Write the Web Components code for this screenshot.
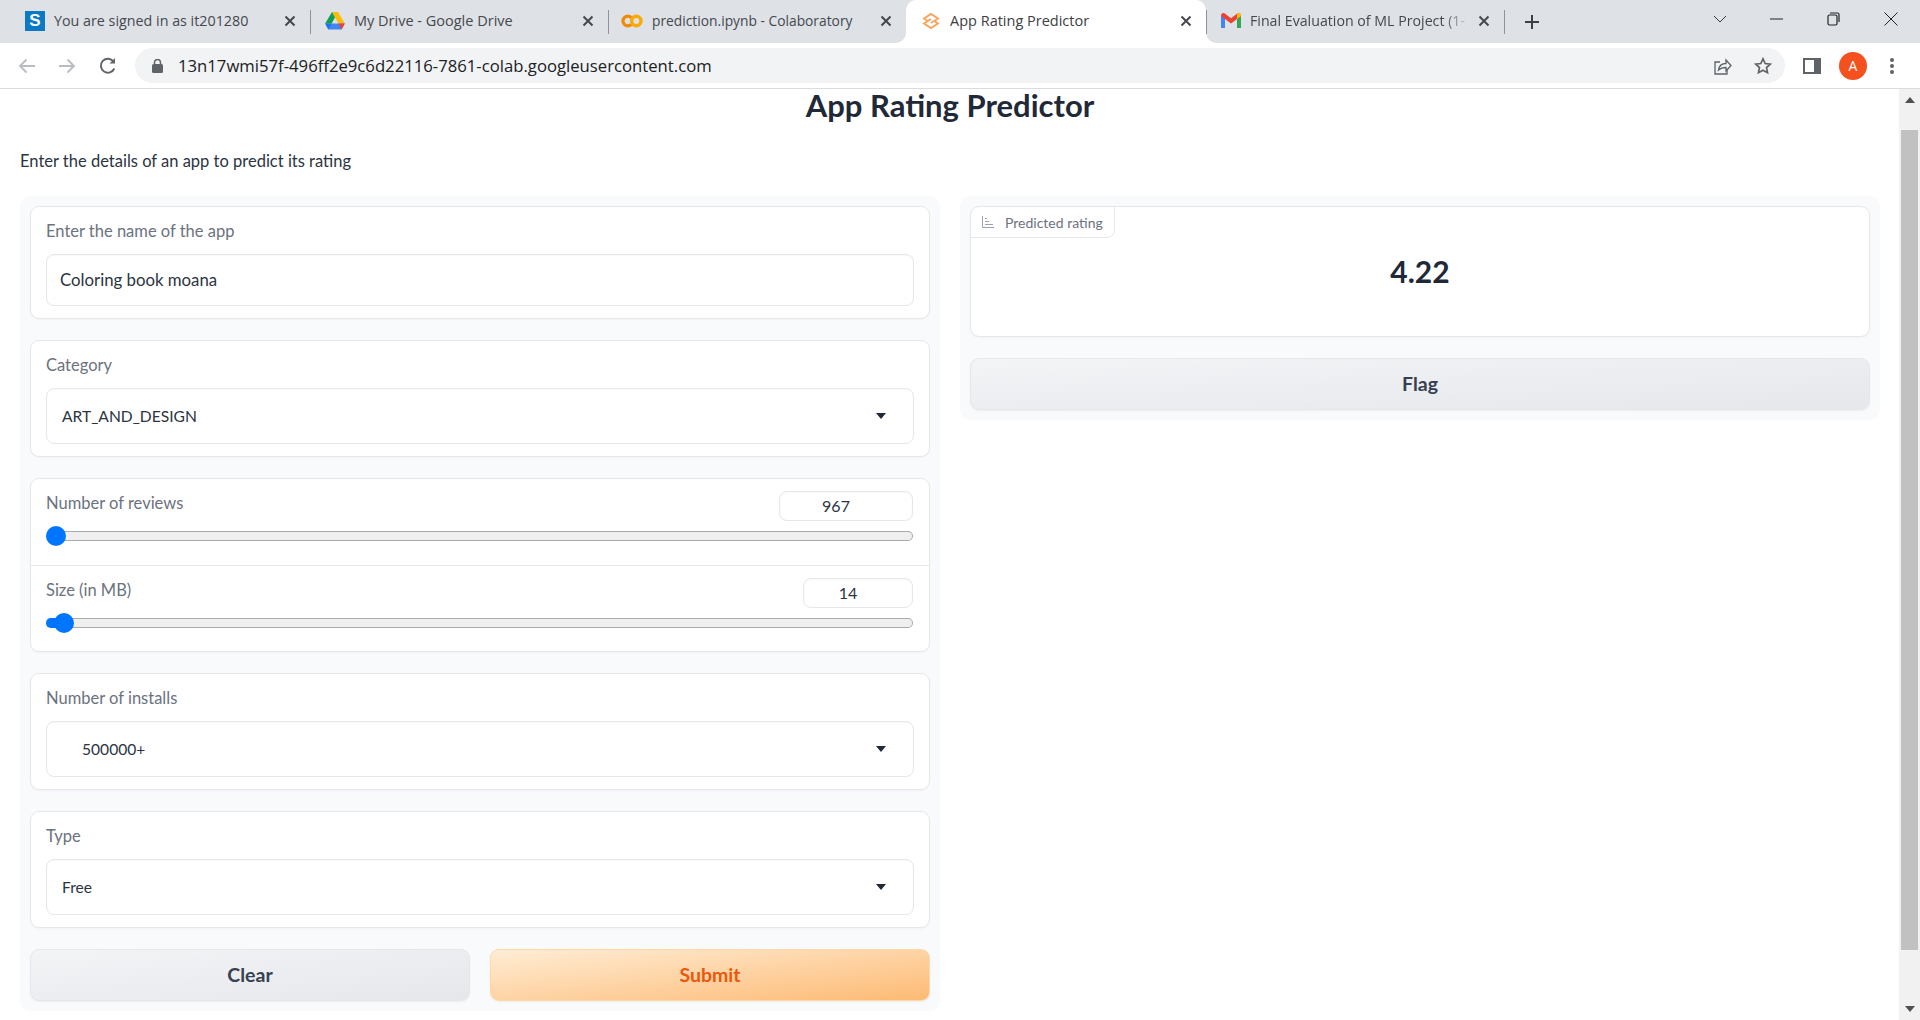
<!DOCTYPE html>
<html>
<head>
<meta charset="utf-8">
<title>App Rating Predictor</title>
<style>
  html, body { margin: 0; height: 100%; overflow: hidden; background: #fff; }
  body { display: flex; flex-direction: column; width: 1920px; height: 1020px; font-family: "Open Sans", "Liberation Sans", sans-serif; }
</style>
</head>
<body>
  <tab-strip>
    <browser-tab style="--w:300px;--fs:14.300px" title-text="You are signed in as it201280">
      <span slot="icon" style="display:flex;width:20px;height:20px;background:#0b79c4;color:#fff;align-items:center;justify-content:center;font:bold 17px 'Liberation Sans',sans-serif">S</span>
    </browser-tab>
    <browser-tab style="--w:298px" title-text="My Drive - Google Drive">
      <svg slot="icon" width="20" height="18" viewBox="0 0 20 18"><path d="M7 0h6l6.800 11.600h-6.400z" fill="#fbbc04"/><path d="M0.200 11.600h19.600L16.600 17.600H3.400z" fill="#4285f4"/><path d="M0.200 11.600 3.400 17.600 6.600 11.600z" fill="#1a73e8"/><path d="M13.400 11.600 16.600 17.600 19.800 11.600z" fill="#ea4335"/><path d="M7 0 10 5.400 6.600 11.600H0.200z" fill="#0f9d58"/></svg>
    </browser-tab>
    <browser-tab style="--w:298px;--fs:13.800px" title-text="prediction.ipynb - Colaboratory">
      <svg slot="icon" width="22" height="14" viewBox="0 0 22 14" style="margin-left:-2px" fill="none" stroke-width="3.400"><circle cx="15.300" cy="7" r="4.700" stroke="#f9ab00"/><path d="M10.200 3.600A4.800 4.800 0 1 0 10.200 10.400" stroke="#f08a0c"/></svg>
    </browser-tab>
    <browser-tab active style="--w:300px" title-text="App Rating Predictor">
      <svg slot="icon" width="18" height="18" viewBox="0 0 18 18" fill="none" stroke="#f7a35c" stroke-width="1.900"><path d="M5.500 9 2 6.500 9 2l7 4.500L9 11"/><path d="M12.500 9 16 11.500 9 16l-7-4.500L9 7"/></svg>
    </browser-tab>
    <browser-tab style="--w:298px;--fs:14.200px" fade title-text="Final Evaluation of ML Project (1-">
      <svg slot="icon" width="20" height="15" viewBox="0 0 20 15"><path d="M0 2.500V15h4V6l6 4.500L16 6v9h4V2.500C20 .5 17.800-.6 16.200.6L10 5.200 3.800.6C2.200-.6 0 .5 0 2.500z" fill="#ea4335"/><path d="M0 2.500V15h4V6L0 3z" fill="#4285f4"/><path d="M16 15h4V3l-4 3z" fill="#34a853"/><path d="M16 6l4-3V2.500C20 .5 17.800-.6 16.200.6L16 .8z" fill="#fbbc04"/></svg>
    </browser-tab>
  </tab-strip>
  <chrome-toolbar url="13n17wmi57f-496ff2e9c6d22116-7861-colab.googleusercontent.com"></chrome-toolbar>
  <page-view>
    <app-header heading="App Rating Predictor" description="Enter the details of an app to predict its rating"></app-header>
    <panel-row>
      <gr-panel>
        <gr-field label="Enter the name of the app" value="Coloring book moana"></gr-field>
        <gr-field dropdown label="Category" value="ART_AND_DESIGN"></gr-field>
        <gr-sliders>
          <gr-slider label="Number of reviews" value="967" box="134" pos="10"></gr-slider>
          <gr-slider label="Size (in MB)" value="14" box="110" pos="18" filled></gr-slider>
        </gr-sliders>
        <gr-field dropdown indent label="Number of installs" value="500000+"></gr-field>
        <gr-field dropdown label="Type" value="Free"></gr-field>
        <gr-actions>
          <gr-button>Clear</gr-button>
          <gr-button primary>Submit</gr-button>
        </gr-actions>
      </gr-panel>
      <gr-panel>
        <gr-output label="Predicted rating" value="4.22"></gr-output>
        <gr-button>Flag</gr-button>
      </gr-panel>
    </panel-row>
  </page-view>

<script>
(function () {
    const sans = `Lato, "Noto Sans", sans-serif`;
    const ui = `"Open Sans", "Noto Sans", sans-serif`;

    // tiny helper so every element does the same shadow setup
    function define(name, html, init) {
        const tmpl = document.createElement("template");
        tmpl.innerHTML = html;
        customElements.define(name, class extends HTMLElement {
            constructor() {
                super();
                this.attachShadow({ mode: "open" }).appendChild(tmpl.content.cloneNode(true));
            }
            connectedCallback() {
                if (init) init(this, this.shadowRoot);
            }
        });
    }

    const closeIcon = `<svg width="12" height="12" viewBox="0 0 12 12" stroke="#45494e" stroke-width="2" fill="none"><path d="M1.500 1.500l9 9M10.500 1.500l-9 9"/></svg>`;

    define("tab-strip", `
      <style>
        :host { display: flex; height: 43px; flex: none; background: #dee1e6; padding-left: 10px; align-items: stretch; }
        .sep { width: 1px; height: 24px; background: #8f9296; align-self: center; margin-top: 1px; }
        .plus { margin-left: 19px; align-self: center; display: flex; }
        .win { margin-left: auto; display: flex; align-items: center; height: 38px; }
        .win svg { display: block; }
        .chev { margin-right: 43px; }
        .min { margin-right: 44px; }
        .max { margin-right: 44px; }
        .cls { margin-right: 22px; }
      </style>
      <slot></slot>
      <span class="sep"></span>
      <span class="plus"><svg width="16" height="16" viewBox="0 0 16 16" stroke="#3c4043" stroke-width="2"><path d="M8 1v14M1 8h14"/></svg></span>
      <div class="win">
        <svg class="chev" width="14" height="8" viewBox="0 0 14 8" fill="none" stroke="#3c4043"><path d="M1 1l6 6 6-6"/></svg>
        <svg class="min" width="13" height="2" viewBox="0 0 13 2" stroke="#222"><path d="M0 1h13"/></svg>
        <svg class="max" width="13" height="14" viewBox="0 0 13 14" fill="none" stroke="#222" stroke-width="1.200"><rect x="1" y="3" width="9" height="10" rx="1.500"/><path d="M3 1h7.500a1.500 1.500 0 0 1 1.500 1.500V10"/></svg>
        <svg class="cls" width="14" height="14" viewBox="0 0 14 14" fill="none" stroke="#222"><path d="M.5.500l13 13M13.500.500l-13 13"/></svg>
      </div>`);

    define("browser-tab", `
      <style>
        :host { display: flex; align-items: center; width: var(--w); box-sizing: border-box; padding: 0 14px 2px 15px; position: relative; font: var(--fs, 14.500px) ${ui}; color: #45494e; }
        :host([active]) { background: #fff; border-radius: 10px 10px 0 0; color: #3c4043; }
        :host([active])::before, :host([active])::after { content: ""; position: absolute; bottom: 0; width: 10px; height: 10px; background: radial-gradient(circle at 0 0, #dee1e6 9.500px, #fff 10px); }
        :host([active])::before { left: -10px; }
        :host([active])::after { right: -10px; background: radial-gradient(circle at 100% 0, #dee1e6 9.500px, #fff 10px); }
        :host(:not([active]):not(:first-child))::before { content: ""; position: absolute; left: 0; top: 10px; width: 1px; height: 24px; background: #8f9296; }
        .ico { width: 20px; flex: none; display: flex; align-items: center; justify-content: center; margin-right: 9px; }
        .t { flex: 1; white-space: nowrap; overflow: hidden; }
        :host([fade]) .t { -webkit-mask-image: linear-gradient(to right, #000 88%, transparent 100%); mask-image: linear-gradient(to right, #000 88%, transparent 100%); }
        .x { flex: none; display: flex; margin-left: 8px; }
      </style>
      <span class="ico"><slot name="icon"></slot></span>
      <span class="t"></span>
      <span class="x">${closeIcon}</span>`,
      (el, root) => { root.querySelector(".t").textContent = el.getAttribute("title-text"); });

    define("chrome-toolbar", `
      <style>
        :host { display: flex; flex: none; height: 46px; box-sizing: border-box; background: #fff; border-bottom: 1px solid #dadce0; align-items: center; padding: 0 0 0 18px; }
        .nav { display: flex; flex: none; width: 117px; align-items: center; }
        .nav svg + svg { margin-left: 22px; }
        .nav svg + svg + svg { margin-left: 23px; }
        .bar { width: 1650px; flex: none; height: 35px; box-sizing: border-box; background: #f1f3f4; border-radius: 18px; display: flex; align-items: center; padding: 0 13px 0 17px; font: 16.700px ${ui}; color: #202124; }
        .url { flex: 1; white-space: nowrap; }
        .lock { display: flex; margin-right: 15px; }
        .right { display: flex; align-items: center; gap: 22px; }
        .tools { display: flex; align-items: center; margin-left: 18px; }
        .avatar { width: 28px; height: 28px; border-radius: 50%; background: #f4511e; color: #fff; font: 14px ${ui}; display: flex; align-items: center; justify-content: center; margin: 0 23px 0 18px; }
      </style>
      <div class="nav">
        <svg width="18" height="16" viewBox="0 0 18 16" fill="none" stroke="#b9bcc0" stroke-width="1.800"><path d="M17 8H2M8.500 1.500 2 8l6.500 6.500"/></svg>
        <svg width="18" height="16" viewBox="0 0 18 16" fill="none" stroke="#b9bcc0" stroke-width="1.800"><path d="M1 8h15M9.500 1.500 16 8l-6.500 6.500"/></svg>
        <svg width="18" height="18" viewBox="0 0 18 18" fill="none" stroke="#5f6368" stroke-width="1.900"><path d="M15.300 11.500A7 7 0 1 1 14.500 4.500"/><path d="M16 1v5.500h-5.500z" fill="#5f6368" stroke="none"/></svg>
      </div>
      <div class="bar">
        <span class="lock"><svg width="11" height="14" viewBox="0 0 11 14" fill="#5f6368"><rect x="0" y="5" width="11" height="9" rx="1.500"/><path d="M2.500 5V3.500a3 3 0 0 1 6 0V5" fill="none" stroke="#5f6368" stroke-width="1.500"/></svg></span>
        <span class="url"></span>
        <div class="right">
          <svg width="18" height="18" viewBox="0 0 18 18" fill="none" stroke="#5f6368" stroke-width="1.300"><path d="M6 5H1v12h12v-4"/><path d="M4.500 13c.6-4 3.500-6.500 7.500-6.500V3l5 5.500-5 5.500v-3.500c-3 0-5.500.6-7.500 2.500z"/></svg>
          <svg width="18" height="18" viewBox="0 0 18 18" fill="none" stroke="#5f6368" stroke-width="1.700"><path d="M9 1.800l2.200 4.700 5.100.6-3.800 3.500 1 5.100L9 13.200l-4.500 2.500 1-5.100L1.700 7.100l5.100-.6z"/></svg>
        </div>
      </div>
      <div class="tools">
        <svg width="18" height="16" viewBox="0 0 18 16"><rect width="18" height="16" fill="#5f6368"/><rect x="2" y="2" width="9" height="12" fill="#fff"/></svg>
        <span class="avatar">A</span>
        <svg width="4" height="16" viewBox="0 0 4 16" fill="#5f6368"><circle cx="2" cy="2" r="2"/><circle cx="2" cy="8" r="2"/><circle cx="2" cy="14" r="2"/></svg>
      </div>`,
      (el, root) => { root.querySelector(".url").textContent = el.getAttribute("url"); });

    define("page-view", `
      <style>
        :host { display: flex; flex: 1; min-height: 0; background: #fff; }
        .content { width: 1899px; flex: none; box-sizing: border-box; padding: 0 19px 0 20px; }
        .bar { width: 21px; flex: none; background: #f1f1f1; display: flex; flex-direction: column; align-items: center; }
        .thumb { width: 17px; height: 820px; background: #c1c1c1; margin-top: 27px; }
        svg { display: block; }
        .up { margin-top: 8px; }
        .down { margin-top: 56px; }
      </style>
      <div class="content"><slot></slot></div>
      <div class="bar">
        <svg class="up" width="10" height="6" viewBox="0 0 10 6" fill="#505050"><path d="M5 0l5 6H0z"/></svg>
        <div class="thumb"></div>
        <svg class="down" width="10" height="6" viewBox="0 0 10 6" fill="#505050"><path d="M5 6 0 0h10z"/></svg>
      </div>`);

    define("app-header", `
      <style>
        :host { display: block; font-family: ${sans}; color: #1f2937; }
        h1 { margin: -2px 0 0; font-size: 31px; line-height: 36px; font-weight: 700; text-align: center; }
        p { margin: 27px 0 24px; font-size: 16.500px; line-height: 22px; color: #2b3442; }
      </style>
      <h1></h1>
      <p></p>`,
      (el, root) => {
          root.querySelector("h1").textContent = el.getAttribute("heading");
          root.querySelector("p").textContent = el.getAttribute("description");
      });

    define("panel-row", `
      <style>
        :host { display: flex; gap: 20px; align-items: flex-start; }
      </style>
      <slot></slot>`);

    define("gr-panel", `
      <style>
        :host { display: flex; flex-direction: column; gap: 21px; width: 920px; flex: none; box-sizing: border-box; padding: 10px; background: #f9fafb; border-radius: 10px; }
      </style>
      <slot></slot>`);

    const caret = `<svg width="10" height="6" viewBox="0 0 10 6" fill="#1f2937"><path d="M0 0h10L5 6z"/></svg>`;

    define("gr-field", `
      <style>
        :host { display: block; box-sizing: border-box; background: #fff; border: 1px solid #e5e7eb; border-radius: 9px; padding: 15px 15px 12px; font-family: ${sans}; box-shadow: 0 1px 2px rgba(0,0,0,.03); }
        label { display: block; font-size: 16.500px; line-height: 20px; color: #6b7280; margin: -1px 0 13px; }
        .box { display: flex; align-items: center; justify-content: space-between; box-sizing: border-box; height: 52px; border: 1px solid #e5e7eb; border-radius: 8px; padding: 0 13px 2px; font-size: 16.800px; color: #2b3442; box-shadow: inset 0 1px 2px rgba(0,0,0,.03); }
        :host([dropdown]) .box { height: 56px; padding: 0 27px 0 15px; font-size: 15.600px; }
        :host([indent]) .box { padding-left: 35px; }
        svg { display: none; }
        :host([dropdown]) svg { display: block; }
      </style>
      <label></label>
      <div class="box"><span class="v"></span>${caret}</div>`,
      (el, root) => {
          root.querySelector("label").textContent = el.getAttribute("label");
          root.querySelector(".v").textContent = el.getAttribute("value");
      });

    define("gr-sliders", `
      <style>
        :host { display: block; background: #fff; border: 1px solid #e5e7eb; border-radius: 9px; box-shadow: 0 1px 2px rgba(0,0,0,.03); }
      </style>
      <slot></slot>`);

    define("gr-slider", `
      <style>
        :host { display: block; box-sizing: border-box; height: 86px; padding: 12px 15px 0; font-family: ${sans}; }
        :host(:not(:first-child)) { border-top: 1px solid #e5e7eb; }
        .head { display: flex; justify-content: space-between; align-items: flex-start; }
        label { font-size: 16.500px; line-height: 20px; color: #6b7280; margin-top: 2px; }
        .num { box-sizing: border-box; height: 30px; border: 1px solid #e5e7eb; border-radius: 8px; font-size: 16px; line-height: 27px; color: #2b3442; text-align: center; padding-right: 20px; margin-right: 1px; box-shadow: inset 0 1px 2px rgba(0,0,0,.03); }
        .track { position: relative; height: 10px; margin: 10px 1px 0 0; box-sizing: border-box; background: #efefef; border: 1px solid #aaa; border-left: 0; border-radius: 5px; }
        .fill { position: absolute; left: 0; top: -1px; height: 10px; background: #0075ff; border-radius: 5px 0 0 5px; }
        .thumb { position: absolute; top: -6px; width: 20px; height: 20px; border-radius: 50%; background: #0075ff; margin-left: -10px; }
      </style>
      <div class="head"><label></label><div class="num"></div></div>
      <div class="track"><div class="fill"></div><div class="thumb"></div></div>`,
      (el, root) => {
          root.querySelector("label").textContent = el.getAttribute("label");
          const num = root.querySelector(".num");
          num.textContent = el.getAttribute("value");
          num.style.width = el.getAttribute("box") + "px";
          const pos = el.getAttribute("pos") + "px";
          root.querySelector(".thumb").style.left = pos;
          root.querySelector(".fill").style.width = el.hasAttribute("filled") ? pos : "0";
      });

    define("gr-actions", `
      <style>
        :host { display: flex; gap: 20px; }
        ::slotted(gr-button) { flex: 1; }
      </style>
      <slot></slot>`);

    define("gr-button", `
      <style>
        :host { display: flex; align-items: center; justify-content: center; height: 52px; box-sizing: border-box; padding-bottom: 2px; border: 1px solid #e5e7eb; border-radius: 9px; background: linear-gradient(to bottom right, #f3f4f6, #e5e7eb); font: 700 19.500px ${sans}; color: #374151; box-shadow: 0 1px 2px rgba(0,0,0,.05); }
        :host([primary]) { background: linear-gradient(to bottom right, #ffedd5, #fdba74); border-color: #fed7aa; color: #ea580c; }
      </style>
      <slot></slot>`);

    define("gr-output", `
      <style>
        :host { display: block; position: relative; height: 131px; box-sizing: border-box; background: #fff; border: 1px solid #e5e7eb; border-radius: 9px; font-family: ${sans}; box-shadow: 0 1px 2px rgba(0,0,0,.03); }
        .tag { position: absolute; left: -1px; top: -1px; height: 32px; width: 145px; box-sizing: border-box; border: 1px solid #e5e7eb; border-radius: 9px 0 8px 0; background: #fff; display: flex; align-items: center; padding-left: 11px; gap: 11px; font-size: 14px; color: #6b7280; }
        .val { text-align: center; font-size: 30px; font-weight: 700; line-height: 36px; color: #1f2937; padding-top: 46px; }
      </style>
      <div class="tag">
        <svg width="12" height="12" viewBox="0 0 12 12" fill="none" stroke="#9ca3af"><path d="M.500 0v11.500H12M3 8.500h8M3 5.500h4M3 2.500h2"/></svg>
        <span class="l"></span>
      </div>
      <div class="val"></div>`,
      (el, root) => {
          root.querySelector(".l").textContent = el.getAttribute("label");
          root.querySelector(".val").textContent = el.getAttribute("value");
      });
})();
</script>
</body>
</html>
